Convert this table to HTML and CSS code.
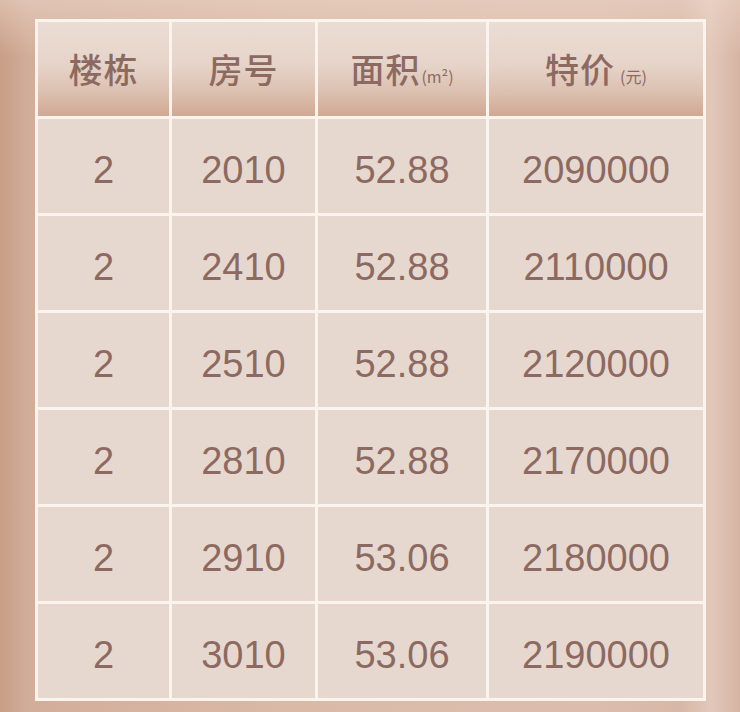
FILE: index.html
```html
<!DOCTYPE html>
<html lang="zh">
<head>
<meta charset="utf-8">
<link rel="stylesheet" href="styles.css">
</head>
<body>
<div class="page">
  <div class="table">
    <div class="th">楼栋</div>
    <div class="th">房号</div>
    <div class="th">面积<span class="unit">(m²)</span></div>
    <div class="th">特价<span class="unit unit-yuan">(元)</span></div>

    <div class="td">2</div><div class="td">2010</div><div class="td">52.88</div><div class="td">2090000</div>
    <div class="td">2</div><div class="td">2410</div><div class="td">52.88</div><div class="td">2110000</div>
    <div class="td">2</div><div class="td">2510</div><div class="td">52.88</div><div class="td">2120000</div>
    <div class="td">2</div><div class="td">2810</div><div class="td">52.88</div><div class="td">2170000</div>
    <div class="td">2</div><div class="td">2910</div><div class="td">53.06</div><div class="td">2180000</div>
    <div class="td">2</div><div class="td">3010</div><div class="td">53.06</div><div class="td">2190000</div>
  </div>
</div>
</body>
</html>
```

FILE: styles.css
```css
html, body {
  margin: 0;
  padding: 0;
}
body {
  width: 740px;
  height: 712px;
  overflow: hidden;
  background:
    linear-gradient(180deg, rgba(236, 214, 200, 0.55) 0%, rgba(236, 214, 200, 0) 8%),
    linear-gradient(90deg, #c89e87 0%, #d2ae9a 4%, #dab9a7 40%, #dcbdad 80%, #d8b7a6 92%, #e2c8bb 96%, #d6b4a3 100%);
}
.page {
  padding: 19px 0 0 35px;
}
.table {
  display: grid;
  grid-template-columns: 131px 143px 168px 214px;
  grid-template-rows: repeat(7, 94px);
  gap: 3px;
  padding: 3px;
  width: max-content;
  background: #fbf4ee;
}
.th, .td {
  display: flex;
  align-items: center;
  justify-content: center;
  color: #8c6a62;
}
.th {
  background: linear-gradient(180deg, #ebddd4 0%, #e6d4c9 45%, #dcc0b0 75%, #d1a892 100%);
  font-family: "Noto Sans CJK SC", "Noto Sans", sans-serif;
  font-size: 34px;
  font-weight: 500;
  letter-spacing: 1px;
  align-items: baseline;
  padding-top: 22px;
  box-sizing: border-box;
}
.unit {
  font-size: 16px;
  font-weight: 400;
  letter-spacing: 0;
  margin-left: 1px;
}
.unit-yuan {
  margin-left: 5px;
}
.td {
  background: #e7d8cf;
  font-family: "Liberation Sans", Arial, sans-serif;
  font-size: 38px;
  padding-top: 8px;
  box-sizing: border-box;
}
```
